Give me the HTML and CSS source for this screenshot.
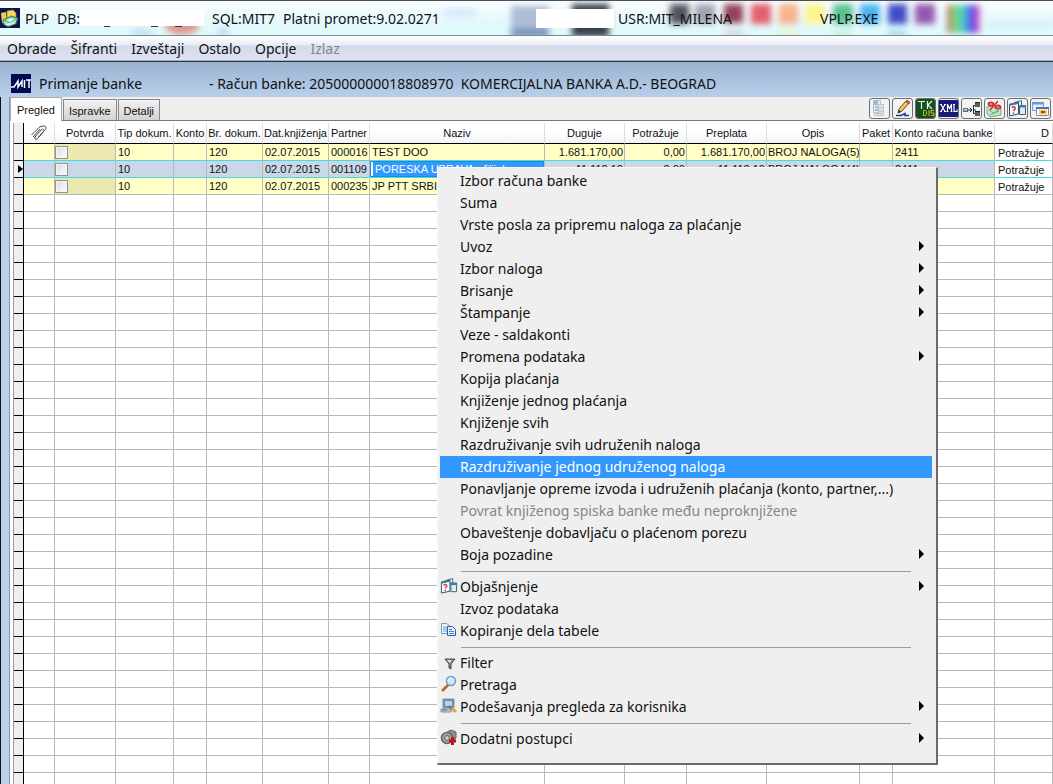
FILE: index.html
```html
<!DOCTYPE html>
<html lang="sr-Latn">
<head>
<meta charset="utf-8">
<title>PLP - Platni promet</title>
<link rel="stylesheet" href="styles.css">
</head>
<body>
<header class="titlebar">
  <svg class="glass" width="1053" height="34" aria-hidden="true">
    <defs><filter id="soft" x="-30%" y="-30%" width="160%" height="160%"><feGaussianBlur stdDeviation="3"/></filter>
    <linearGradient id="rainbow"><stop offset="0" stop-color="#c66"/><stop offset=".25" stop-color="#7d7"/><stop offset=".5" stop-color="#4cc"/><stop offset=".75" stop-color="#54e"/><stop offset="1" stop-color="#e6b"/></linearGradient></defs>
    <g filter="url(#soft)">
      <ellipse cx="182" cy="25" rx="17" ry="9" fill="#dd9a8c"/>
      <rect x="132" y="29" width="20" height="5" fill="#b5d5f2"/>
      <rect x="218" y="28" width="10" height="6" fill="#b5d5f2"/>
      <rect x="444" y="8" width="32" height="8" fill="#d3e8fb"/>
      <rect x="511" y="5" width="38" height="24" fill="#adbdd7"/>
      <rect x="511" y="28" width="38" height="8" fill="#6a8dbb"/>
      <rect x="572" y="3" width="37" height="33" fill="#3a4248"/>
      <rect x="670" y="3" width="19" height="20" fill="#50545c"/>
      <rect x="695" y="3" width="20" height="20" fill="#a0a6b4"/>
      <rect x="724" y="3" width="19" height="19" fill="#94405a"/>
      <rect x="751" y="3" width="20" height="20" fill="#e0606e"/>
      <rect x="779" y="3" width="19" height="20" fill="#f8b38c"/>
      <rect x="805" y="3" width="20" height="20" fill="#fbf68e"/>
      <rect x="833" y="3" width="20" height="20" fill="#5cc28e"/>
      <rect x="860" y="3" width="20" height="20" fill="#48b4f0"/>
      <rect x="888" y="3" width="19" height="20" fill="#3f4dc6"/>
      <rect x="915" y="3" width="20" height="20" fill="#9558b0"/>
      <rect x="947" y="4" width="33" height="28" fill="url(#rainbow)"/>
      <rect x="725" y="31" width="18" height="3" fill="#dba9bd"/>
      <rect x="779" y="31" width="18" height="3" fill="#f6ec90"/>
      <rect x="833" y="31" width="18" height="3" fill="#a6e6be"/>
      <rect x="888" y="31" width="18" height="3" fill="#67b5ea"/>
      <rect x="985" y="22" width="68" height="3" fill="#c3e9f2"/>
    </g>
    <path d="M104 25.500h6M151 25.500h7M175 25.500h7" stroke="#334"/>
  </svg>
  <svg class="app-icon" width="20" height="20" viewBox="0 0 20 20" aria-hidden="true">
    <rect width="20" height="20" fill="#0b1450"/>
    <path d="M1 5l5-1 1 10-5 1z" fill="#f3cf4a"/><path d="M7 3l6-1 3 3v5H7z" fill="#f4d85a" stroke="#a97d15" stroke-width=".7"/>
    <path d="M3 12l8-4 7 2-2 6-8 3-5-3z" fill="#6cbf93" stroke="#1d6650" stroke-width=".7"/>
    <path d="M6 12l5-2 4 1-5 3z" fill="#dff5e8"/><path d="M4 14l5 2 7-3M5 16l4 1 6-2" stroke="#e6fff2" fill="none"/>
  </svg>
  <span class="t-plp">PLP</span><span class="t-db">DB:</span><span class="mask mask-db"></span>
  <span class="t-sql">SQL:MIT7</span><span class="t-app">Platni promet:9.02.0271</span>
  <span class="mask mask-user"></span><span class="t-user">USR:MIT_MILENA</span><span>VPLP.EXE</span>
</header>
<nav class="menubar">
  <button>Obrade</button><button>Šifranti</button><button>Izveštaji</button><button>Ostalo</button><button>Opcije</button><button disabled>Izlaz</button>
</nav>
<main class="child">
  <div class="child-title">
    <svg class="mit-icon" width="20" height="19" viewBox="0 0 20 19" aria-hidden="true"><rect width="20" height="19" fill="#000a52"/><path d="M0 13h3l4-6v6l4-6v6M13.500 6v8M15 6h5M18 6v8" fill="none" stroke="#fff" stroke-width="1.500"/></svg>
    <h1 class="child-name">Primanje banke</h1>
    <span class="account">- Račun banke: 205000000018808970&nbsp; KOMERCIJALNA BANKA A.D.- BEOGRAD</span>
  </div>
  <div class="panel">
    <div class="strip">
      <div class="tabs" role="tablist">
        <button class="tab active" role="tab" aria-selected="true">Pregled</button><button class="tab" role="tab">Ispravke</button><button class="tab" role="tab">Detalji</button>
      </div>
      <div class="tools">
        <button class="tool" aria-label="Dokument"><svg width="19" height="19" viewBox="0 0 19 19"><path d="M3.500 1.500h7v12h-7z" fill="#e6edf1" stroke="#b2bcc3"/><path d="M4 2h4v4H4z" fill="#8fbcd2"/><path d="M5 8h4M5 11h3" stroke="#8bafc2" stroke-width="1.500"/><path d="M8.500 5.500h5v11h-9v-3h4z" fill="#e4e8ea" stroke="#bcc4c8"/><path d="M9 9h4M9 12h4M6 14.500h6" stroke="#a9b9c3"/></svg></button>
        <button class="tool" aria-label="Izmena"><svg width="19" height="19" viewBox="0 0 19 19"><path d="M6 10L13 2l3 2-7 8-4 2z" fill="#f3c957" stroke="#70431c"/><path d="M12.500 2.500l1.500-1.500 3 2-1 2z" fill="#e75b50" stroke="#913026" stroke-width=".7"/><path d="M5 14l1-3 2 2z" fill="#352421"/><path d="M3 16.500h5l4-2v2h4" fill="none" stroke="#24349b" stroke-width="1.500"/></svg></button>
        <button class="tool" aria-label="TK DIS"><svg width="19" height="19" viewBox="0 0 19 19"><rect width="19" height="19" fill="#174e20"/><path d="M2 2.500h7M5.500 2v8M11.500 2v8M16 2l-4 4 4 4" fill="none" stroke="#e5f1df" stroke-width="1.200"/><path d="M7.500 11.500v5h2l1-1v-3l-1-1zM13 11v6M18 11.500h-3v2.500h3v2.500h-3" fill="none" stroke="#b9c51e"/></svg></button>
        <button class="tool" aria-label="XML"><svg width="19" height="19" viewBox="0 0 19 19"><rect y="1" width="19" height="17" fill="#161c77"/><path d="M2 5.500l4 7M6 5.500l-4 7M1 5.500h2M5 5.500h2M1 12.500h2M5 12.500h2M8.500 12.500v-7l2 4 2-4v7M8 5.500h1M12 5.500h1M7.500 12.500h2M11.500 12.500h2M15 5.500v7h3v-2M14 5.500h2" fill="none" stroke="#fff" stroke-width="1.200"/></svg></button>
        <button class="tool" aria-label="Povezivanje"><svg width="19" height="19" viewBox="0 0 19 19"><path d="M1 9h5v4H1z" fill="#4f7d7c"/><path d="M2 10h3v1.500H2z" fill="#b5e0df"/><path d="M6 11h4M8 9l2 2-2 2M14 6.500h-2.500v8H14M11 11h3" stroke="#222" fill="none"/><path d="M13 3h5v5h-5zM13 12h5v5h-5z" fill="#59615e"/><path d="M13 3.500h5M13 12.500h5" stroke="#222"/></svg></button>
        <button class="tool" aria-label="Procenat"><svg width="19" height="19" viewBox="0 0 19 19"><path d="M2 8l6-1 3 3 5-1v7l-11 2-3-3z" fill="#c0e5c8" stroke="#71b083"/><path d="M4 11l4 3 6-3M5 16l9-4" stroke="#69b37b" fill="none"/><path d="M5 11L13 2" stroke="#c72c32" stroke-width="1.500"/><ellipse cx="6" cy="5" rx="2.500" ry="1.500" fill="none" stroke="#d13036" stroke-width="2"/><ellipse cx="13" cy="8" rx="2.500" ry="1.500" fill="none" stroke="#d13036" stroke-width="2"/></svg></button>
        <button class="tool" aria-label="Objašnjenje"><svg width="19" height="19" viewBox="0 0 19 19"><use href="#help-windows"/></svg></button>
        <button class="tool" aria-label="Prozori"><svg width="19" height="19" viewBox="0 0 19 19"><path d="M1.500 3.500h11v8h-11z" fill="#e5eefc" stroke="#7d9cd0"/><path d="M1 3h12v2.500H1z" fill="#6d95d8"/><path d="M5.500 8.500h12v8h-12z" fill="#fff" stroke="#6d8fc8"/><path d="M5 8h13v2H5z" fill="#4474c5"/><path d="M8 10.500h8v5H8z" fill="#f6cf4c"/><path d="M10 13h4" stroke="#b33627" stroke-width="2"/></svg></button>
      </div>
    </div>
    <div class="grid-wrap">
      <table class="grid">
        <colgroup><col class="w-mark"><col class="w-clip"><col class="w-ok"><col class="w-type"><col class="w-konto"><col class="w-num"><col class="w-date"><col class="w-partner"><col class="w-name"><col class="w-sum"><col class="w-due"><col class="w-sum"><col class="w-desc"><col class="w-pack"><col class="w-bank"><col></colgroup>
        <thead><tr><th></th><th><svg class="clip" width="18" height="16" viewBox="0 0 18 16" aria-label="Prilog"><path d="M1.500 10L9 2.500C11 1 16 0 16 3c0 1-1 2-2 3l-6 7c-1 2-4 2-3-1l6-7c2-2 4 0 2 2l-5 6M3 12l7-8" fill="none" stroke="#444"/></svg></th><th>Potvrda</th><th>Tip dokum.</th><th>Konto</th><th>Br. dokum.</th><th>Dat.knjiženja</th><th>Partner</th><th>Naziv</th><th>Duguje</th><th>Potražuje</th><th>Preplata</th><th>Opis</th><th>Paket</th><th>Konto računa banke</th><th class="last-head">D</th></tr></thead>
        <tbody id="rows">
          <tr class="data before"><td></td><td></td><td class="ok"><input type="checkbox" aria-label="Potvrda 000016"></td><td>10</td><td></td><td>120</td><td>02.07.2015</td><td>000016</td><td>TEST DOO</td><td class="num">1.681.170,00</td><td class="num">0,00</td><td class="num">1.681.170,00</td><td class="desc">BROJ NALOGA(5)</td><td></td><td>2411</td><td class="side">Potražuje</td></tr>
          <tr class="data current"><td><svg class="marker" width="6" height="8" viewBox="0 0 6 8" aria-hidden="true"><path d="M0 0l5 4-5 4z"/></svg></td><td></td><td class="ok"><input type="checkbox" aria-label="Potvrda 001109"></td><td>10</td><td></td><td>120</td><td>02.07.2015</td><td>001109</td><td class="edit"><input class="name-edit" aria-label="Naziv" value="PORESKA UPRAVA - filijala"></td><td class="num">11.112,10</td><td class="num">0,00</td><td class="num">11.112,10</td><td class="desc">BROJ NALOGA(4)</td><td></td><td>2411</td><td class="side">Potražuje</td></tr>
          <tr class="data"><td></td><td></td><td class="ok"><input type="checkbox" aria-label="Potvrda 000235"></td><td>10</td><td></td><td>120</td><td>02.07.2015</td><td>000235</td><td>JP PTT SRBIJA</td><td></td><td></td><td></td><td></td><td></td><td></td><td class="side">Potražuje</td></tr>
        </tbody>
      </table>
    </div>
  </div>
</main>
<div class="context" role="menu">
  <button role="menuitem">Izbor računa banke</button>
  <button role="menuitem">Suma</button>
  <button role="menuitem">Vrste posla za pripremu naloga za plaćanje</button>
  <button role="menuitem" class="sub">Uvoz</button>
  <button role="menuitem" class="sub">Izbor naloga</button>
  <button role="menuitem" class="sub">Brisanje</button>
  <button role="menuitem" class="sub">Štampanje</button>
  <button role="menuitem">Veze - saldakonti</button>
  <button role="menuitem" class="sub">Promena podataka</button>
  <button role="menuitem">Kopija plaćanja</button>
  <button role="menuitem">Knjiženje jednog plaćanja</button>
  <button role="menuitem">Knjiženje svih</button>
  <button role="menuitem">Razdruživanje svih udruženih naloga</button>
  <button role="menuitem" class="selected">Razdruživanje jednog udruženog naloga</button>
  <button role="menuitem">Ponavljanje opreme izvoda i udruženih plaćanja (konto, partner,...)</button>
  <button role="menuitem" disabled>Povrat knjiženog spiska banke među neproknjižene</button>
  <button role="menuitem">Obaveštenje dobavljaču o plaćenom porezu</button>
  <button role="menuitem" class="sub">Boja pozadine</button>
  <hr>
  <button role="menuitem" class="sub has-icon"><svg width="18" height="18" viewBox="0 0 19 19"><g id="help-windows"><path d="M6.500 3.500l7-2v5l-7 1z" fill="#e7f2f8" stroke="#46738c"/><path d="M1.500 5.500l9-2.500v12l-9 2z" fill="#f4f9fd" stroke="#324d5d"/><path d="M1 5l9.500-2.500v2.500L1 7z" fill="#437793"/><path d="M11.500 6.500h6v9h-6z" fill="#d9ecf6" stroke="#32617a"/><path d="M11 6h7v2.500h-7z" fill="#3d7c9d"/><path d="M4 9c1-2 4-1 3 1L5.500 12M5.500 13.500V15" stroke="#d73438" stroke-width="1.500" fill="none"/></g></svg>Objašnjenje</button>
  <button role="menuitem">Izvoz podataka</button>
  <button role="menuitem" class="has-icon"><svg width="18" height="18" viewBox="0 0 18 18"><path d="M1.500 2.500h5l3 2v8h-8z" fill="#e9f2fc" stroke="#7899c3"/><path d="M3 6h4M3 8h4M3 10h4" stroke="#7b9dce"/><path d="M7.500 5.500h5l3 3v6h-8z" fill="#e6f0ff" stroke="#315ba5"/><path d="M9 8.500h3M9 10.500h5M9 12.500h5" stroke="#497dcc"/></svg>Kopiranje dela tabele</button>
  <hr>
  <button role="menuitem" class="has-icon"><svg width="18" height="18" viewBox="0 0 18 18"><path d="M5 6h10l-4 5v5l-2-1v-4z" fill="#909393" stroke="#444"/><path d="M7 7h4l-1 3z" fill="#e7e7e7"/></svg>Filter</button>
  <button role="menuitem" class="has-icon"><svg width="18" height="18" viewBox="0 0 18 18"><path d="M2 16l6-6" stroke="#b36e37" stroke-width="3"/><path d="M1 15l5-5" stroke="#eeb277"/><circle cx="11" cy="6" r="4.500" fill="#c9e8fa" stroke="#6e99bd" stroke-width="1.500"/><path d="M8 6c0-2 2-3 4-3" stroke="#fff" fill="none"/></svg>Pretraga</button>
  <button role="menuitem" class="sub has-icon"><svg width="18" height="18" viewBox="0 0 18 18"><path d="M3 2h11v9H3z" fill="#6f89b5" stroke="#8995a9"/><path d="M5 4h7v5H5z" fill="#b9d2ec"/><path d="M1 12h10v3H1z" fill="#c8ccd1" stroke="#888f98"/><path d="M2 13h5" stroke="#657080"/><path d="M9 9l5 5" stroke="#667584" stroke-width="2"/><path d="M12 11l4 4" stroke="#e0ad36" stroke-width="3"/></svg>Podešavanja pregleda za korisnika</button>
  <hr>
  <button role="menuitem" class="sub has-icon"><svg width="18" height="18" viewBox="0 0 18 18"><path d="M7 3l4-2 5 2v6l-4 4H8z" fill="#8c8e90" stroke="#666"/><circle cx="7" cy="9" r="5.500" fill="#a5a7a8" stroke="#666" stroke-width="1.500"/><circle cx="7" cy="9" r="2.500" fill="#c8c8c8" stroke="#666"/><path d="M12.500 8v8M9 12h7" stroke="#bd161b" stroke-width="3"/></svg>Dodatni postupci</button>
</div>
<script src="app.js"></script>
</body>
</html>
```
FILE: styles.css
```css
* { box-sizing: border-box; }
body {
  margin: 0;
  height: 100vh;
  display: flex;
  flex-direction: column;
  overflow: hidden;
  position: relative;
  background: #fff;
  color: #111;
  font-family: "Noto Sans", sans-serif;
  font-size: 14px;
  white-space: nowrap;
}
button { font: inherit; color: inherit; border: 0; background: none; padding: 0; margin: 0; }
svg { flex: none; display: block; }

.titlebar {
  position: relative;
  flex: none;
  height: 36px;
  display: flex;
  align-items: center;
  border-top: 1px solid #4b5158;
  border-bottom: 1px solid #7d8890;
  background: linear-gradient(#fbfdff, #e5f8fd 60%, #dcfbf9);
}
.glass { position: absolute; left: 0; top: 0; }
.titlebar span, .app-icon { position: relative; flex: none; }
.app-icon { margin-right: 5px; }
.t-plp { width: 32px; }
.t-db { width: 23px; }
.mask { background: #fff; }
.mask-db { width: 124px; height: 16px; margin-right: 8px; }
.t-sql { width: 71px; }
.t-app { width: 253px; }
.mask-user { width: 78px; height: 19px; margin-right: 4px; }
.t-user { width: 202px; }

.menubar {
  flex: none;
  height: 26px;
  display: flex;
  align-items: center;
  gap: 14px;
  padding-left: 7px;
  border-bottom: 1px solid #2c3540;
  box-shadow: inset 0 -1px #a9abb8;
  background: linear-gradient(#fff, #eaecf6 36%, #d5daeb 40%, #dfe3f3);
}
.menubar button:disabled, .context button:disabled { color: #868686; }

.child {
  flex: 1;
  min-height: 0;
  display: flex;
  flex-direction: column;
  background: linear-gradient(90deg, #111 1px, #b9d1ea 1px);
}
.child-title {
  flex: none;
  height: 35px;
  display: flex;
  align-items: center;
  padding: 8px 0 0 11px;
  background: linear-gradient(#9ab4d0, #b8cfea);
}
.child-name { width: 170px; margin: 0 0 0 8px; font-size: 14px; font-weight: 400; }
.panel {
  flex: 1;
  min-height: 0;
  display: flex;
  flex-direction: column;
  margin-left: 9px;
  border-left: 1px solid #8a949f;
  background: #fff;
  font-family: "Liberation Sans", Arial, sans-serif;
  font-size: 11px;
}
.strip {
  flex: none;
  height: 24px;
  display: flex;
  justify-content: space-between;
  background: #efefef;
  border-bottom: 1px solid #777;
}
.tabs { display: flex; align-items: flex-end; gap: 1px; }
.tab {
  height: 21px;
  padding: 2px 5px 0;
  border: 1px solid #898989;
  border-bottom: 0;
  background: linear-gradient(#f2f2f2, #d3d3d3);
}
.tab.active { height: 24px; margin-bottom: -1px; padding: 0 6px; border-color: #aaa; background: #fff; }
.tools { display: flex; gap: 2px; padding: 1px 2px 0 0; }
.tool {
  width: 21px;
  height: 21px;
  border: 1px solid #6e6e6e;
  border-radius: 3px;
  background: #f3f3f3;
  overflow: hidden;
}

.grid-wrap { flex: 1; min-height: 0; margin: 2px 0 0 3px; overflow: hidden; border-left: 1px solid #a0a0a0; }
.grid { width: 100%; table-layout: fixed; border-spacing: 0; }
.w-mark { width: 10px; } .w-clip { width: 31px; } .w-ok { width: 61px; }
.w-type { width: 58px; } .w-konto { width: 33px; } .w-num { width: 56px; }
.w-date { width: 66px; } .w-partner { width: 41px; } .w-name { width: 175px; }
.w-sum { width: 80px; } .w-due { width: 62px; } .w-desc { width: 93px; }
.w-pack { width: 33px; } .w-bank { width: 102px; }
.grid th, .grid td { padding: 0 2px; border-right: 1px solid #b8b8b8; border-bottom: 1px solid #b8b8b8; overflow: hidden; }
.grid th {
  height: 21px;
  padding: 0;
  font-weight: 400;
  border-right-color: #ddd;
  border-bottom-color: #000;
  background: linear-gradient(#fff, #fff 45%, #f2f3f5);
}
.grid th.last-head { text-align: right; padding-right: 3px; }
.clip { margin: auto; }
.grid td { height: 17px; line-height: 14px; }
.grid tr > :first-child { padding: 0; background: #efefef; border-color: #000; }
.data td { background: #ffffc6; }
.data td.ok { padding: 0; background: #ebe8b0; }
.data.before td:not(:first-child) { border-bottom-color: #42dede; }
.data.current td:not(:first-child) { background: #c9d7e8; border-bottom-color: #42dede; }
.data td.num { text-align: right; padding-right: 1px; }
.grid .data td.desc { padding: 0 0 0 1px; }
.grid .data td.side { background: #fff; padding-left: 3px; vertical-align: bottom; }
.marker { margin-left: 4px; }
.ok input {
  appearance: none;
  display: block;
  width: 13px;
  height: 13px;
  margin: 0;
  border: 1px solid #929292;
  background: linear-gradient(135deg, #d8dadc, #fff);
  box-shadow: inset 0 0 0 1px #f5f5f5;
}
.grid td.edit { padding: 0; }
.name-edit {
  display: block;
  width: 100%;
  height: 16px;
  padding: 0 4px;
  border: 1px solid #2689d8;
  background: #3399ff;
  box-shadow: inset 2px 0 #fff;
  color: #fff;
  font: inherit;
}

.context {
  position: absolute;
  left: 437px;
  top: 167px;
  width: 501px;
  padding: 2px 4px 13px 2px;
  background: #efefef;
  border: 1px solid #f8f8f8;
  border-right: 2px solid #6b6b6b;
  border-bottom: 2px solid #6b6b6b;
}
.context button {
  position: relative;
  display: flex;
  align-items: center;
  width: 100%;
  height: 22px;
  padding: 0 0 2px 20px;
  text-align: left;
}
.context .has-icon { padding-left: 0; gap: 2px; }
.context .selected { background: #3398fe; color: #fff; }
.context .sub::after {
  content: "";
  position: absolute;
  right: 8px;
  border: 5px solid transparent;
  border-left: 5px solid #000;
  border-right: 0;
}
.context hr { height: 1px; margin: 5px 21px 4px 21px; border: 0; background: #9b9b9b; }
```
FILE: app.js
```js
// Fill the rest of the view with empty grid rows
const body = document.getElementById("rows");
const count = Math.ceil(window.innerHeight / 17);
for (let i = 0; i < count; i++) {
  const row = body.insertRow();
  for (let c = 0; c < 16; c++) row.insertCell();
}
```
